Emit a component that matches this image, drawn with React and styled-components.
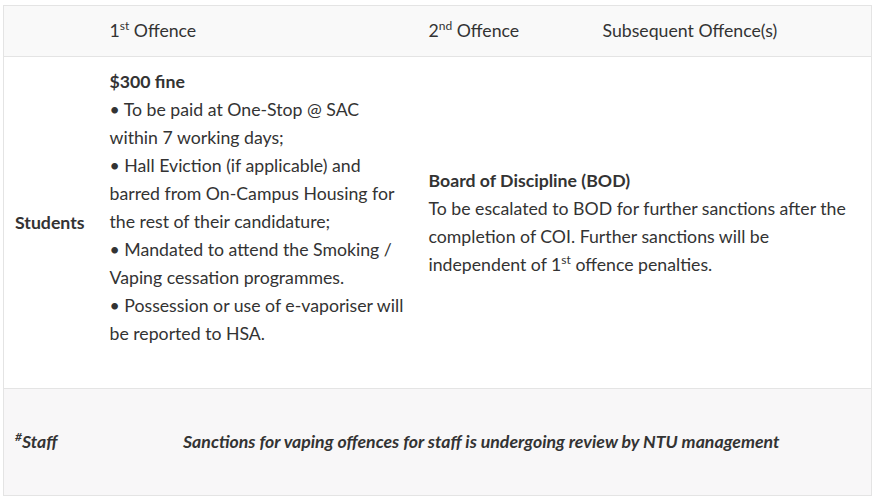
import React from "react";
import styled, { createGlobalStyle } from "styled-components";

const GlobalStyle = createGlobalStyle`
  body {
    margin: 0;
    background: #ffffff;
    font-family: Lato, "Open Sans", sans-serif;
    color: #333333;
  }
`;

const Page = styled.div`
  padding: 5px 2px 0 3px;
`;

const Table = styled.table`
  width: 868px;
  border-collapse: collapse;
  table-layout: fixed;
  border: 1px solid #e4e4e4;
  font-size: 17.7px;
  line-height: 28px;
`;

const Row = styled.tr`
  background: ${(p) => p.$bg || "#ffffff"};
  border-bottom: 1px solid #e4e4e4;
`;

const Cell = styled.td`
  padding: ${(p) => p.$pad || "11px 4px 11px 12px"};
  vertical-align: ${(p) => p.$valign || "middle"};
  text-align: ${(p) => p.$align || "left"};
  font-weight: ${(p) => (p.$bold ? 700 : 400)};
  font-style: ${(p) => (p.$italic ? "italic" : "normal")};
  color: #333333;
`;

const Sup = styled.sup`
  font-size: 0.68em;
  line-height: 0;
  vertical-align: 0.55em;
`;

const Title = styled.div`
  font-weight: 700;
`;

const Line = styled.div``;

const App = () => {
  return (
    <Page>
      <GlobalStyle />
      <Table>
        <colgroup>
          <col style={{ width: 94 }} />
          <col style={{ width: 319 }} />
          <col style={{ width: 174 }} />
          <col style={{ width: 281 }} />
        </colgroup>
        <tbody>
          <Row $bg="#f9f9f9">
            <Cell></Cell>
            <Cell>
              1<Sup>st</Sup> Offence
            </Cell>
            <Cell>
              2<Sup>nd</Sup> Offence
            </Cell>
            <Cell>Subsequent Offence(s)</Cell>
          </Row>
          <Row>
            <Cell $bold $pad="11px 4px 11px 11px">
              Students
            </Cell>
            <Cell $pad="11px 8px 40px 12px" $valign="top">
              <Title>$300 fine</Title>
              <Line>• To be paid at One-Stop @ SAC within 7 working days;</Line>
              <Line>
                • Hall Eviction (if applicable) and barred from On-Campus
                Housing for the rest of their candidature;
              </Line>
              <Line>
                • Mandated to attend the Smoking / Vaping cessation programmes.
              </Line>
              <Line>
                • Possession or use of e-vaporiser will be reported to HSA.
              </Line>
            </Cell>
            <Cell colSpan={2}>
              <Title>Board of Discipline (BOD)</Title>
              <Line>
                To be escalated to BOD for further sanctions after the
                completion of COI. Further sanctions will be independent of 1
                <Sup>st</Sup> offence penalties.
              </Line>
            </Cell>
          </Row>
          <Row $bg="#f8f7f8">
            <Cell $bold $italic $pad="39px 4px 39px 11px">
              <Sup>#</Sup>Staff
            </Cell>
            <Cell
              $bold
              $italic
              $align="center"
              colSpan={3}
              $pad="39px 12px 39px 6px"
            >
              Sanctions for vaping offences for staff is undergoing review by
              NTU management
            </Cell>
          </Row>
        </tbody>
      </Table>
    </Page>
  );
};

export default App;
